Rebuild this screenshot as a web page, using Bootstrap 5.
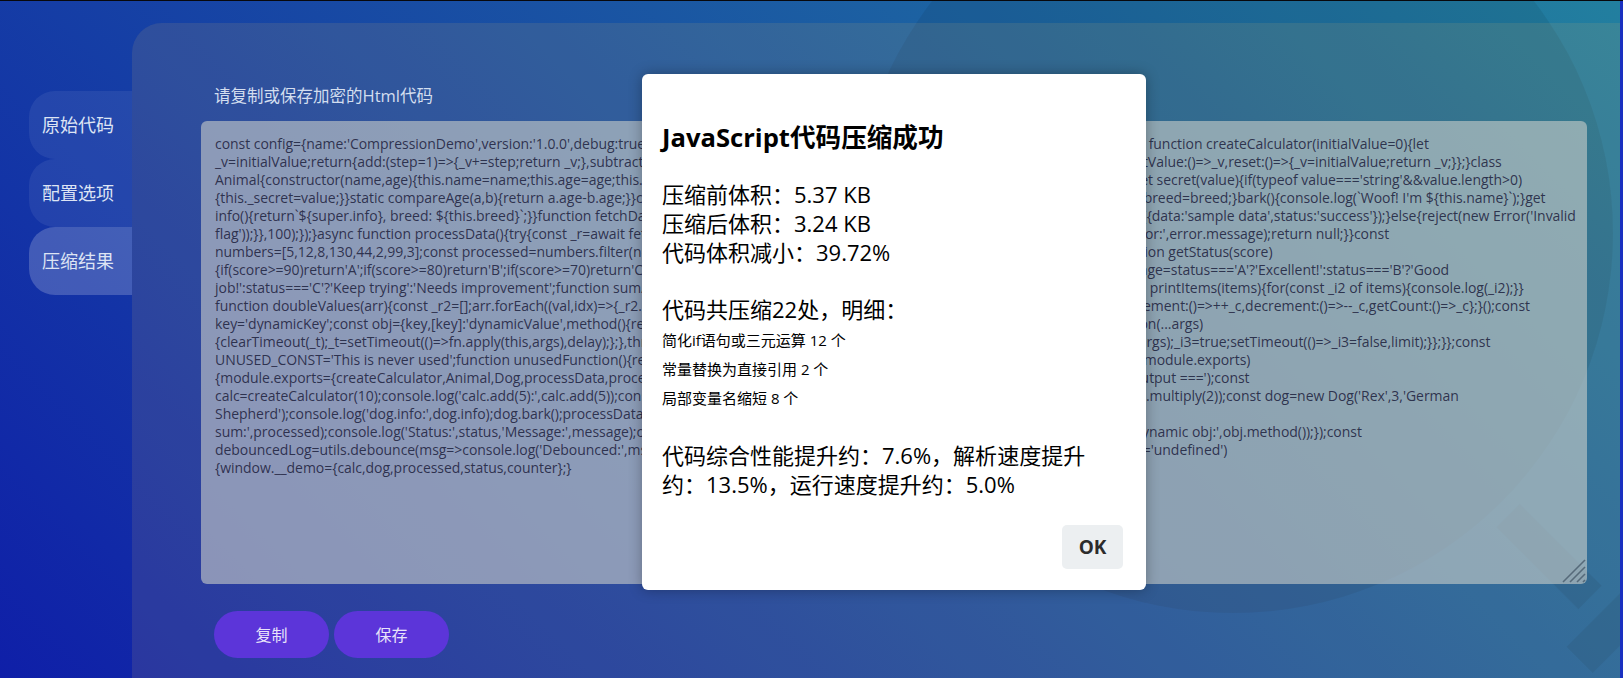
<!DOCTYPE html>
<html lang="zh-CN">
<head>
<meta charset="utf-8">
<title>JavaScript代码压缩</title>
<link href="https://cdn.jsdelivr.net/npm/bootstrap@5.3.0/dist/css/bootstrap.min.css" rel="stylesheet">
<style>
html,body{height:100%;}
body{margin:0;overflow:hidden;font-family:"Open Sans","Noto Sans CJK SC",sans-serif;background:#1a30c0;}
.topline{height:1px;background:#08080c;}
.stage{position:relative;width:1620px;height:677px;background:linear-gradient(45deg,#0f1fa8,#227f9f);overflow:hidden;}
.deco{position:absolute;}
.deco-circle{left:853px;top:-148px;width:760px;height:760px;border-radius:50%;background:rgba(0,0,0,.07);}
.deco-bar1{left:1491px;top:539px;width:116px;height:33px;transform:rotate(45deg);background:rgba(0,0,0,.07);}
.deco-bar2{left:1565px;top:605px;width:100px;height:37px;transform:rotate(-45deg);background:rgba(0,0,0,.07);}
.shell{position:relative;height:100%;padding-top:22px;}
.side{width:132px;padding:68px 0 0 29px;}
.tabx{height:68px;border-radius:26px 0 0 26px;background:rgba(255,255,255,.07);color:#dde4f4;font-size:18px;padding-left:13px;line-height:68px;}
.tabx.on{background:rgba(255,255,255,.2);}
.panelx{background:rgba(225,185,100,.125);border-radius:30px 0 0 0;padding:62px 33px 0 69px;}
.lblx{color:#d3deef;font-size:16.5px;line-height:22px;padding-left:13px;margin-bottom:14px;}
.codewrap{position:relative;width:1386px;height:463px;}
.codex.form-control{display:block;height:100%;width:100%;padding:14px;border:0;border-radius:6px;background:rgba(204,206,201,.6);color:rgba(28,32,60,.86);font-family:"Open Sans","Noto Sans CJK SC",sans-serif;font-size:14px;letter-spacing:-.04px;line-height:18px;overflow:hidden;white-space:pre;resize:none;box-shadow:none;}
.gripx{position:absolute;right:1px;bottom:1px;width:24px;height:24px;}
.btnrow{padding:27px 0 0 13px;gap:5px;}
.btnx.btn{width:115px;height:47px;border:0;border-radius:24px;background:#5c35d9;color:#e8e4fa;font-size:16px;padding:0;}
.dlg{position:absolute;left:642px;top:73px;width:504px;height:516px;background:#fff;border-radius:6px;box-shadow:0 0 14px rgba(0,0,0,.3);padding:20px;color:#000;}
.dlg-t{font-size:25.6px;font-weight:700;line-height:34px;margin:27px 0 25px;}
.dlg-b{font-size:22px;line-height:29px;}
.dlg-s{font-size:15px;line-height:29px;}
.sx1{padding-top:2px;}
.okx.btn{position:absolute;right:23px;bottom:21px;width:61px;height:44px;padding:0;border:0;border-radius:5px;background:#eceff1;color:#2c2c2c;font-weight:700;font-size:19px;}
</style>
</head>
<body>
<div class="topline"></div>
<div class="stage">
  <div class="deco deco-circle"></div>
  <div class="deco deco-bar1"></div>
  <div class="deco deco-bar2"></div>
  <div class="shell d-flex">
    <div class="side flex-shrink-0">
      <div class="tabx">原始代码</div>
      <div class="tabx">配置选项</div>
      <div class="tabx on">压缩结果</div>
    </div>
    <div class="panelx flex-grow-1">
      <div class="lblx">请复制或保存加密的Html代码</div>
      <div class="codewrap">
      <textarea class="form-control codex" wrap="off" spellcheck="false">const config={name:'CompressionDemo',version:'1.0.0',debug:true,maxItems:100};let counter=0;                                                                                      function createCalculator(initialValue=0){let
_v=initialValue;return{add:(step=1)=>{_v+=step;return _v;},subtract:(step=1)=>{_v-=step;return _v;},multiply:(f)=>{                       _v*=f;return _v;},getValue:()=>_v,reset:()=>{_v=initialValue;return _v;}};}class
Animal{constructor(name,age){this.name=name;this.age=age;this._secret=null;}get info(){                                                        return`${this.name}`;}set secret(value){if(typeof value==='string'&&value.length>0)
{this._secret=value;}}static compareAge(a,b){return a.age-b.age;}}class Dog extends Animal{ constructor(name,age,breed){super(name,age);this.breed=breed;}bark(){console.log(`Woof! I'm ${this.name}`);}get
info(){return`${super.info}, breed: ${this.breed}`;}}function fetchData(flag){return new Promise((resolve,reject)=>{setTimeout(()=>{if(flag){resolve({data:'sample data',status:'success'});}else{reject(new Error('Invalid
flag'));}},100);});}async function processData(){try{const _r=await fetchData(true);                                           return _r;}catch(error){console.error('Error:',error.message);return null;}}const
numbers=[5,12,8,130,44,2,99,3];const processed=numbers.filter(n=>n>10).map(n=>n*2);                                                                                          function getStatus(score)
{if(score>=90)return'A';if(score>=80)return'B';if(score>=70)return'C';return'D';}                                                 const status=getStatus(85);const message=status==='A'?'Excellent!':status==='B'?'Good
job!':status==='C'?'Keep trying':'Needs improvement';function sumAll(...nums){                                                                               return nums;}function printItems(items){for(const _i2 of items){console.log(_i2);}}
function doubleValues(arr){const _r2=[];arr.forEach((val,idx)=>{_r2.push(val*2);});return _r2;}const counterModule=function(){let _c=0;return{increment:()=>++_c,decrement:()=>--_c,getCount:()=>_c};}();const
key='dynamicKey';const obj={key,[key]:'dynamicValue',method(){return this.key;}};                    const utils={debounce(fn,delay){let _t;return function(...args)
{clearTimeout(_t);_t=setTimeout(()=>fn.apply(this,args),delay);};},throttle(fn,limit){                        let _i3;return function(...args){if(!_i3){fn.apply(this,args);_i3=true;setTimeout(()=>_i3=false,limit);}};}};const
UNUSED_CONST='This is never used';function unusedFunction(){return'never called';}                                            if(typeof module!=='undefined'&&module.exports)
{module.exports={createCalculator,Animal,Dog,processData,processed,getStatus};}    document.addEventListener('load',()=>{console.log('=== Output ===');const
calc=createCalculator(10);console.log('calc.add(5):',calc.add(5));console.log('calc.                                                                                        multiply(2):',calc.multiply(2));const dog=new Dog('Rex',3,'German
Shepherd');console.log('dog.info:',dog.info);dog.bark();processData().then(r=>console.log('Processed
sum:',processed);console.log('Status:',status,'Message:',message);console.log('Counter:',                        counterModule.increment());console.log('Dynamic obj:',obj.method());});const
debouncedLog=utils.debounce(msg=>console.log('Debounced:',msg),300);debouncedLog('test');                                                     if(typeof window!=='undefined')
{window.__demo={calc,dog,processed,status,counter};}</textarea>
      <svg class="gripx" viewBox="0 0 24 24"><g stroke="#566a7a" stroke-width="1.6" fill="none"><path d="M1 23 23 1"/><path d="M8 23 23 8"/><path d="M15 23 23 15"/><path d="M21 23 23 21"/></g></svg>
      </div>
      <div class="btnrow d-flex">
        <button type="button" class="btn btnx">复制</button>
        <button type="button" class="btn btnx">保存</button>
      </div>
    </div>
  </div>
  <div class="dlg">
    <div class="dlg-t">JavaScript代码压缩成功</div>
    <div class="dlg-b">压缩前体积：5.37 KB</div>
    <div class="dlg-b">压缩后体积：3.24 KB</div>
    <div class="dlg-b">代码体积减小：39.72%</div>
    <div class="dlg-b mt-4 pt-1">代码共压缩22处，明细：</div>
    <div class="dlg-s sx1">简化if语句或三元运算 12 个</div>
    <div class="dlg-s">常量替换为直接引用 2 个</div>
    <div class="dlg-s">局部变量名缩短 8 个</div>
    <div class="dlg-b mt-4 pt-1">代码综合性能提升约：7.6%，解析速度提升<br>约：13.5%，运行速度提升约：5.0%</div>
    <button type="button" class="btn okx">OK</button>
  </div>
</div>
<script src="https://cdn.jsdelivr.net/npm/bootstrap@5.3.0/dist/js/bootstrap.bundle.min.js"></script>
</body>
</html>
